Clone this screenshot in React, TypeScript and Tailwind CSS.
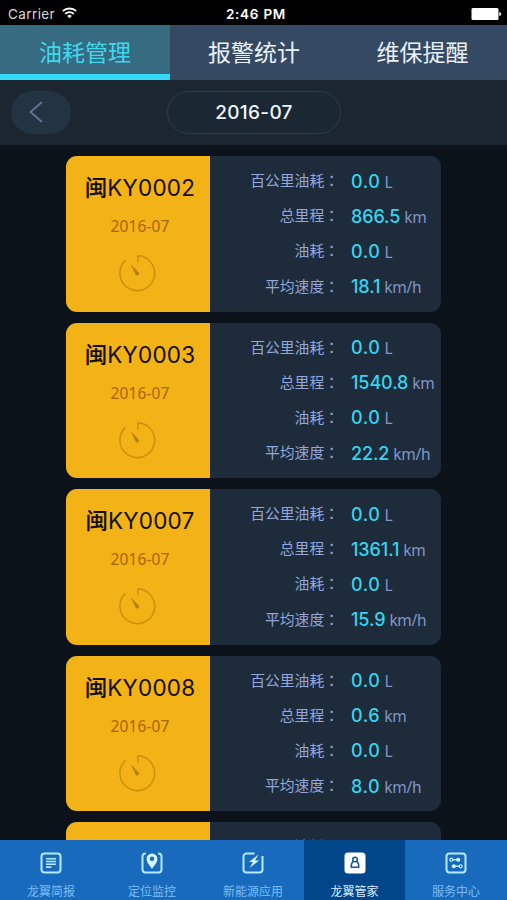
import type { ReactNode } from 'react'

const vehicles = [
  { plate: 'KY0002', total: '866.5', speed: '18.1' },
  { plate: 'KY0003', total: '1540.8', speed: '22.2' },
  { plate: 'KY0007', total: '1361.1', speed: '15.9' },
  { plate: 'KY0008', total: '0.6', speed: '8.0' },
  { plate: 'KY0009', total: '0.0', speed: '0.0' },
].map(v => ({
  plate: v.plate,
  month: '2016-07',
  metrics: [
    { label: '百公里油耗', value: '0.0', unit: 'L' },
    { label: '总里程', value: v.total, unit: 'km' },
    { label: '油耗', value: '0.0', unit: 'L' },
    { label: '平均速度', value: v.speed, unit: 'km/h' },
  ],
}))

function StatusBar() {
  return (
    <div className="grid h-[25px] shrink-0 grid-cols-3 items-center bg-black px-2 pt-[3px] font-['Inter','Liberation_Sans',sans-serif] text-[13.5px] leading-5 text-white">
      <div className="flex items-center gap-[7px]">
        <span className="tracking-[0.4px] text-[#d8d8d8]">Carrier</span>
        <svg width="15" height="12" viewBox="0 0 15 12" fill="none" stroke="#fff" strokeWidth="1.8" className="-mt-0.5">
          <path d="M0.8 4.2a9.6 9.6 0 0 1 13.4 0" />
          <path d="M3.2 6.8a6.1 6.1 0 0 1 8.6 0" />
          <path d="M7.5 11.3 5.2 9a3.2 3.2 0 0 1 4.6 0z" fill="#fff" stroke="none" />
        </svg>
      </div>
      <span className="pl-[5px] text-center font-semibold tracking-[0.75px]">2:46 PM</span>
      <svg width="31" height="12" viewBox="0 0 31 12" fill="#fff" className="-mr-[3px] justify-self-end">
        <rect x="0.5" y="0" width="27" height="12" rx="1.5" />
        <path d="M28.3 4q2 0.3 2 2t-2 2z" />
      </svg>
    </div>
  )
}

function GaugeIcon() {
  return (
    <svg width="38" height="38" viewBox="0 0 38 38" fill="none" stroke="#cd8f0e" strokeWidth="1.5">
      <path d="M18.9 8.6V1.8A17.4 17.4 0 1 1 6.5 6.4" />
      <path d="M12.6 11.4 19.9 19a1.8 1.8 0 0 1-2.8 1.9z" fill="#b8800f" stroke="#b8800f" strokeWidth="0.6" strokeLinejoin="round" />
    </svg>
  )
}

function VehicleCard({ plate, month, metrics }: (typeof vehicles)[number]) {
  return (
    <div className="flex h-[155.5px] w-[375px] shrink-0 overflow-hidden rounded-[11px] bg-[#1e2b3b]">
      <div className="flex w-36 shrink-0 flex-col items-center bg-[#f3b215]">
        <div className="mt-[17px] flex h-[30px] items-center pl-1 text-[22.5px] leading-[30px] whitespace-nowrap text-[#130f08]">
          <span className="font-medium">闽</span>
          <span className="font-['Inter',sans-serif] tracking-[0.2px]">{plate}</span>
        </div>
        <div className="mt-[13px] pl-1 text-[15.5px] leading-5 tracking-[0.1px] text-[#a9640f]">{month}</div>
        <div className="mt-[18px]">
          <GaugeIcon />
        </div>
      </div>
      <div className="flex flex-1 flex-col pt-[7.5px]">
        {metrics.map((m, i) => (
          <div key={i} className="flex h-[35.2px] items-center whitespace-nowrap">
            <div className="w-[129px] shrink-0 pb-0.5 text-right text-[14.8px] text-[#93a7dc]">
              {m.label}
              <span lang="zh-TW" className="font-['Noto_Sans_CJK_TC',sans-serif]">：</span>
            </div>
            <div className="flex items-baseline gap-1 pl-3">
              <span className={`font-['Inter',sans-serif] text-[18px] font-medium text-[#34d5ee] ${m.value.length > 3 ? 'tracking-[-0.1px]' : 'tracking-[0.6px]'}`}>
                {m.value}
              </span>
              <span className="text-[15.5px] tracking-[-0.3px] text-[#8196c8]">{m.unit}</span>
            </div>
          </div>
        ))}
      </div>
    </div>
  )
}

function NavItem({ label, active, children }: { label: string; active?: boolean; children: ReactNode }) {
  return (
    <div className={`flex flex-col items-center pt-3 ${active ? 'bg-[#004688] text-[#dcecff]' : 'bg-[#186bbc] text-[#7cbdf6]'}`}>
      <svg width="22" height="22" viewBox="0 0 22 22" fill="none" stroke="#b5e9ff" strokeWidth="2">
        {children}
      </svg>
      <span className="mt-[9px] text-[12px] leading-[17px]">{label}</span>
    </div>
  )
}

export default function App() {
  return (
    <div className="flex h-[900px] w-[507px] flex-col overflow-hidden bg-[#0c121a] font-['Noto_Sans','Noto_Sans_CJK_SC',sans-serif]">
      <StatusBar />

      {/* Top tabs */}
      <div className="grid h-[54.5px] shrink-0 grid-cols-[170px_168px_169px] bg-[#354a62] text-center text-[23px] leading-[55px] text-[#e9f1fb]">
        <div className="h-[54.5px] border-b-[6px] border-[#35d9f5] bg-[#376b81] text-[#3ed8ee]">油耗管理</div>
        <div className="h-[54.5px]">报警统计</div>
        <div className="h-[54.5px]">维保提醒</div>
      </div>

      {/* Month picker */}
      <div className="grid h-[65.5px] shrink-0 grid-cols-[155px_175px_1fr] items-center bg-[#1c2630]">
        <div className="ml-[11px] flex h-[43px] w-[60px] items-center justify-center rounded-full bg-[#243341]">
          <svg width="14" height="22" viewBox="0 0 14 22" fill="none" stroke="#63789b" strokeWidth="1.7" className="-ml-[11px]">
            <path d="M13 1 1.5 11 13 21" />
          </svg>
        </div>
        <div className="ml-3 flex h-[43px] w-[174px] items-center justify-center rounded-full border border-[#2c3d4b] bg-[#1b2834] pt-0.5 font-['Inter','Liberation_Sans',sans-serif] text-[19px] font-medium tracking-[0.3px] text-[#eff5fd]">
          2016-07
        </div>
      </div>

      {/* Vehicle list */}
      <div className="flex min-h-0 flex-1 flex-col gap-[11px] overflow-hidden pt-[11px] pl-[66px]">
        {vehicles.map(v => <VehicleCard key={v.plate} {...v} />)}
      </div>

      {/* Bottom navigation */}
      <div className="grid h-[60px] shrink-0 grid-cols-[102px_100px_102px_101px_102px]">
        <NavItem label="龙翼简报">
          <rect x="1.5" y="1.5" width="19" height="19" rx="3" />
          <path d="M6 6.7h10M6 9.5h10M6 12.3h10M6 15.1h5.5" strokeWidth="1.6" />
        </NavItem>
        <NavItem label="定位监控">
          <path d="M4.8 1.5C2.5 1.5 1.5 3 1.5 4.5v13a3 3 0 0 0 3 3h13a3 3 0 0 0 3-3v-13c0-1.5-1-3-3.3-3" />
          <path fillRule="evenodd" d="M11 1.5a5.4 5.4 0 0 0-5.4 5.4c0 3.7 3.6 6.7 5.4 10.1 1.8-3.4 5.4-6.4 5.4-10.1A5.4 5.4 0 0 0 11 1.5zm0 3a2.3 2.3 0 1 1 0 4.6 2.3 2.3 0 0 1 0-4.6z" fill="#d8f6ff" stroke="none" />
        </NavItem>
        <NavItem label="新能源应用">
          <path d="M12.5 1.5h-8a3 3 0 0 0-3 3v13a3 3 0 0 0 3 3h13a3 3 0 0 0 3-3V4" />
          <path d="M16.5 2.5 7 10h4l-3.5 6 9.5-7.5h-4z" fill="#d8f6ff" stroke="none" />
        </NavItem>
        <NavItem label="龙翼管家" active>
          <rect x="0.5" y="0.5" width="21" height="21" rx="3.5" fill="#fff" stroke="none" />
          <circle cx="11" cy="7.5" r="2.3" stroke="#125596" strokeWidth="1.5" />
          <path d="M9.3 9.4c-1.7 1.2-2.3 3.2-2 5.8h7.4c.3-2.6-.3-4.6-2-5.8" stroke="#125596" strokeWidth="1.5" />
        </NavItem>
        <NavItem label="服务中心">
          <rect x="1.5" y="1.5" width="19" height="19" rx="3" />
          <path d="M7 7.7h6M9 14.3h6" strokeWidth="1.4" />
          <circle cx="6.3" cy="7.7" r="1.5" strokeWidth="1.3" />
          <circle cx="13.2" cy="7.7" r="2" fill="#d8f6ff" stroke="none" />
          <circle cx="8.8" cy="14.3" r="2" fill="#d8f6ff" stroke="none" />
          <circle cx="15.7" cy="14.3" r="1.5" strokeWidth="1.3" />
        </NavItem>
      </div>
    </div>
  )
}
